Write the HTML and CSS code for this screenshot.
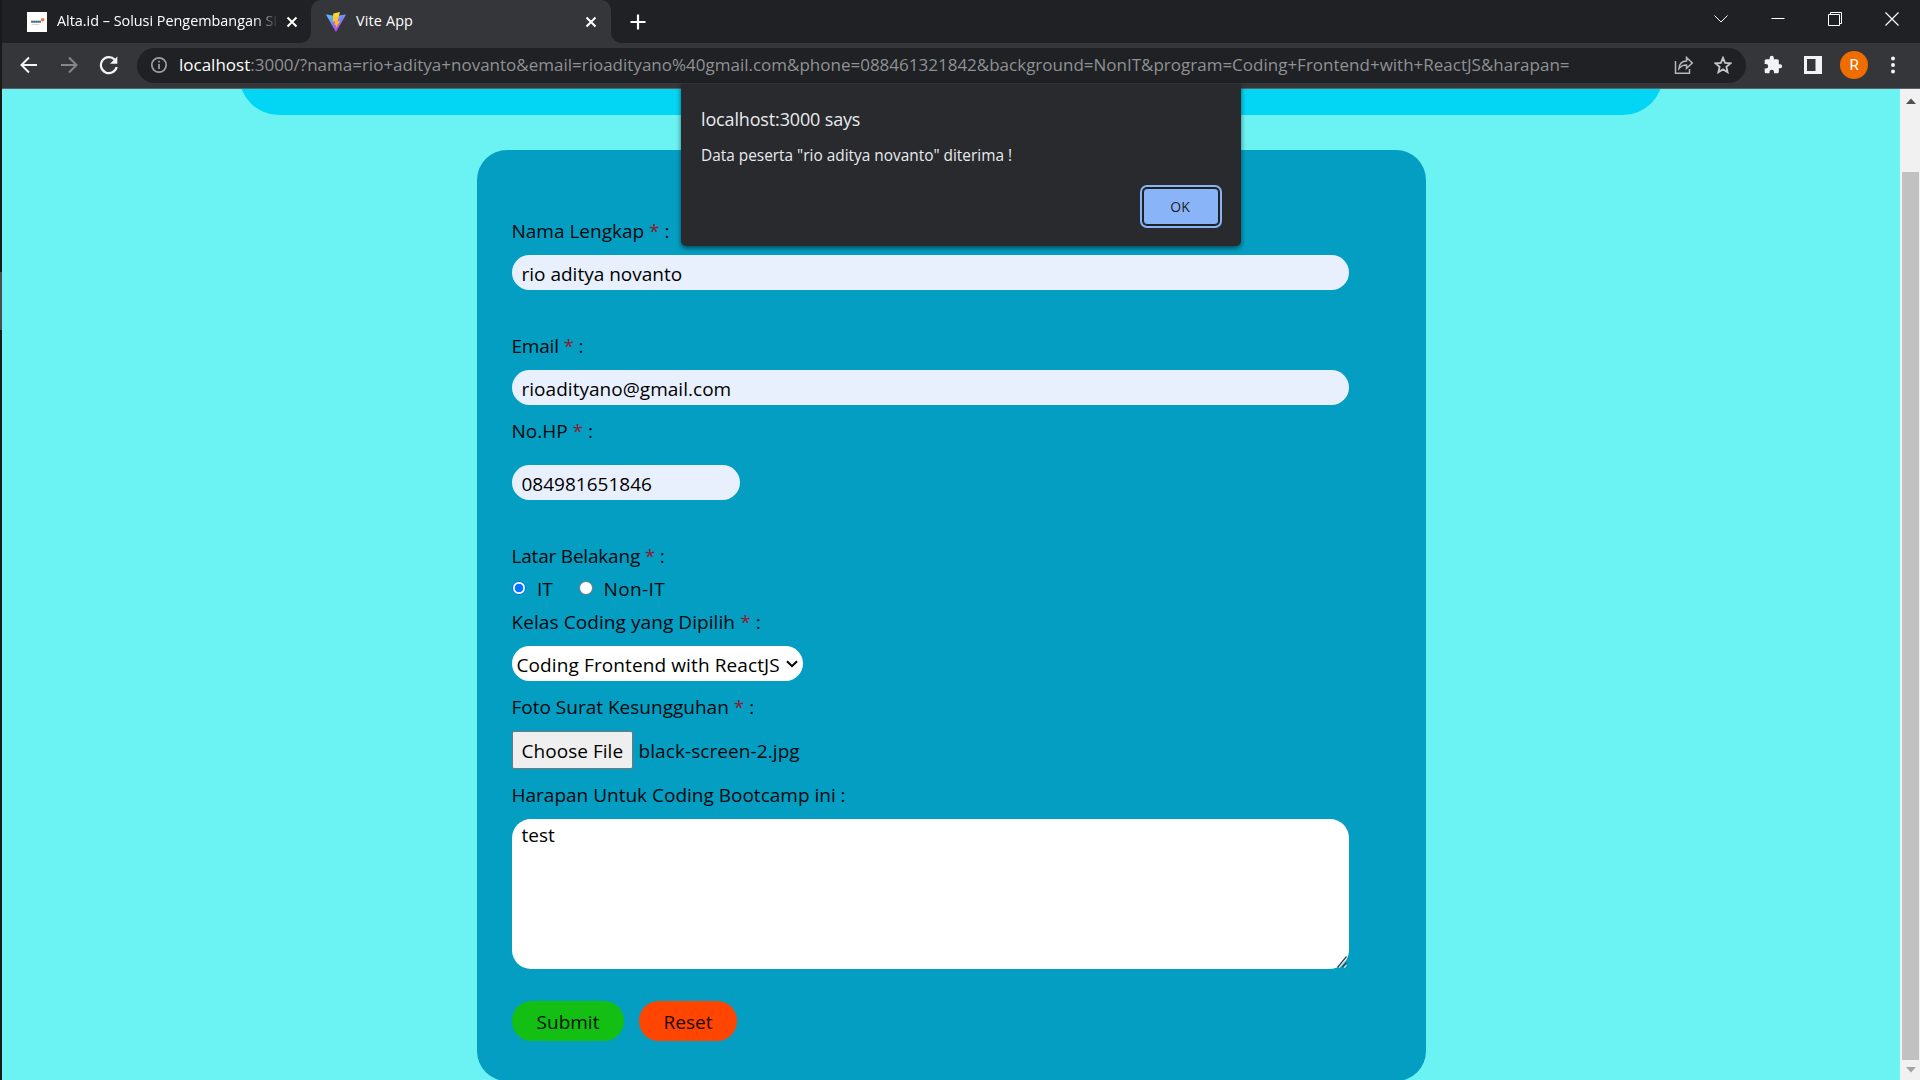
FILE: index.html
```html
<!DOCTYPE html>
<html lang="id">
<head>
<meta charset="utf-8">
<title>Vite App</title>
<link rel="stylesheet" href="styles.css">
</head>
<body>
<div class="screen">
  <div class="desktop-edge"><span class="edge-mark"></span></div>
  <div class="browser">
    <header class="tabstrip">
      <div class="tab tab-idle">
        <svg class="favicon" width="20" height="20" viewBox="0 0 20 20"><rect width="20" height="20" fill="#fff"/><path d="M4 9.700h10" stroke="#6f86a3" stroke-width="2.200"/><path d="M4.500 9.700h9" stroke="#3f5d86" stroke-width="1" stroke-dasharray="1.500 .7"/><path d="M4.500 12.500h8" stroke="#c9ced4" stroke-width=".8"/><circle cx="15.700" cy="7.700" r="1.800" fill="#f47b30"/></svg>
        <span class="tab-title fade">Alta.id – Solusi Pengembangan SI</span>
        <svg class="tab-close" width="12" height="12" viewBox="0 0 12 12"><path d="M1.500 1.500l9 9m0-9l-9 9" stroke="#fff" stroke-width="2"/></svg>
      </div>
      <div class="tab tab-active">
        <svg class="favicon" width="20" height="20" viewBox="0 0 20 20">
          <defs>
            <linearGradient id="v" x1="0" y1="0" x2=".6" y2="1"><stop offset="0" stop-color="#41d1ff"/><stop offset="1" stop-color="#bd34fe"/></linearGradient>
            <linearGradient id="b" x1="0" y1="0" x2="0" y2="1"><stop offset="0" stop-color="#ffdd35"/><stop offset="1" stop-color="#ffa800"/></linearGradient>
          </defs>
          <path d="M.5 2.400L10 4l9.500-1.600a.3.300 0 0 1 .3.500L10.300 19.600a.4.400 0 0 1-.7 0L.200 2.900a.3.300 0 0 1 .3-.5z" fill="url(#v)"/>
          <path d="M14 0L7.300 1.400 6.700 9.700l2.500-.5-.8 4 2-.6-1 5 4.700-8.700-2.700.6z" fill="url(#b)"/>
        </svg>
        <span class="tab-title">Vite App</span>
        <svg class="tab-close" width="12" height="12" viewBox="0 0 12 12"><path d="M1.500 1.500l9 9m0-9l-9 9" stroke="#fff" stroke-width="2"/></svg>
      </div>
      <svg class="new-tab" width="16" height="16" viewBox="0 0 16 16"><path d="M8 .5v15M.5 8h15" stroke="#fff" stroke-width="2.200"/></svg>
      <div class="window-buttons">
        <svg width="14" height="14" viewBox="0 0 14 14"><path d="M.5 3.500L7 10l6.500-6.500" fill="none" stroke="#fff"/></svg>
        <svg width="14" height="14" viewBox="0 0 14 14"><path d="M.5 6.500h13" stroke="#fff"/></svg>
        <svg width="14" height="14" viewBox="0 0 14 14"><path d="M.5 2.500h11v11H.5zM2.500 2.500v-2h11v11h-2" fill="none" stroke="#fff"/></svg>
        <svg width="14" height="14" viewBox="0 0 14 14"><path d="M.5.5l13 13m0-13l-13 13" stroke="#fff" stroke-width="1.200"/></svg>
      </div>
    </header>

    <div class="toolbar">
      <svg width="18" height="18" viewBox="0 0 18 18" fill="none" stroke="#f1f3f4" stroke-width="2"><path d="M17 9H2M9 1.500L1.500 9 9 16.500"/></svg>
      <svg width="18" height="18" viewBox="0 0 18 18" fill="none" stroke="#85878a" stroke-width="2"><path d="M1 9h15M9 1.500L16.500 9 9 16.500"/></svg>
      <svg width="20" height="20" viewBox="0 0 20 20"><path d="M15.800 4.700A8 8 0 1 0 17.700 12" fill="none" stroke="#f1f3f4" stroke-width="2.200"/><path d="M18.300 1.500v7.300H11z" fill="#f1f3f4"/></svg>
      <div class="omnibox">
        <svg width="18" height="18" viewBox="0 0 18 18"><circle cx="9" cy="9" r="7.200" fill="none" stroke="#9aa0a6" stroke-width="1.700"/><path d="M9 8v5M9 4.800v1.800" stroke="#9aa0a6" stroke-width="1.700"/></svg>
        <span class="url"><span class="host">localhost</span>:3000/?nama=rio+aditya+novanto&amp;email=rioadityano%40gmail.com&amp;phone=088461321842&amp;background=NonIT&amp;program=Coding+Frontend+with+ReactJS&amp;harapan=</span>
        <svg class="share" width="20" height="20" viewBox="0 0 20 20" fill="none" stroke="#b4b7bb" stroke-width="1.500"><path d="M1.500 6v12.200h14V14"/><path d="M5 13.500C5.500 8.500 8.500 6 12.500 6V2.500L18.300 8l-5.800 5.300V10C9.500 10 7 11 5 13.500z"/></svg>
        <svg width="18" height="18" viewBox="0 0 18 18"><path d="M9 1.800l2.100 5 5.400.5-4.100 3.600 1.200 5.300L9 13.400l-4.600 2.800 1.200-5.300L1.500 7.300l5.400-.5z" fill="none" stroke="#c4c7ca" stroke-width="1.800"/></svg>
      </div>
      <svg width="20" height="20" viewBox="0 0 24 24"><path fill="#f1f3f4" d="M20.500 11H19V7a2 2 0 0 0-2-2h-4V3.500a2.500 2.500 0 0 0-5 0V5H4a2 2 0 0 0-2 2v3.800h1.500a2.700 2.700 0 0 1 0 5.400H2V20a2 2 0 0 0 2 2h3.800v-1.500a2.700 2.700 0 0 1 5.400 0V22H17a2 2 0 0 0 2-2v-4h1.500a2.500 2.500 0 0 0 0-5z"/></svg>
      <svg class="panel" width="18" height="18" viewBox="0 0 18 18"><path fill="#f1f3f4" fill-rule="evenodd" d="M0 0h18v18H0zM3 3v12h8.500V3z"/></svg>
      <span class="avatar">R</span>
      <svg class="kebab" width="4" height="18" viewBox="0 0 4 18" fill="#f1f3f4"><circle cx="2" cy="2.500" r="2"/><circle cx="2" cy="9" r="2"/><circle cx="2" cy="15.500" r="2"/></svg>
    </div>

    <div class="viewport">
      <main class="page">
        <div class="banner"></div>
        <form class="card">
          <label class="label" for="nama">Nama Lengkap <i>*</i> :</label>
          <input class="field" id="nama" type="text" value="rio aditya novanto">
          <label class="label spaced tight" for="email">Email <i>*</i> :</label>
          <input class="field wide-text" id="email" type="text" value="rioadityano@gmail.com">
          <label class="label near" for="hp">No.HP <i>*</i> :</label>
          <input class="field field-short" id="hp" type="text" value="084981651846">
          <span class="label spaced tight">Latar Belakang <i>*</i> :</span>
          <div class="radios">
            <span class="radio checked"></span><span class="it">IT</span>
            <span class="radio"></span><span class="non-it">Non-IT</span>
          </div>
          <span class="label label-kelas">Kelas Coding yang Dipilih <i>*</i> :</span>
          <div class="select">
            <span>Coding Frontend with ReactJS</span>
            <svg width="12" height="8" viewBox="0 0 12 8"><path d="M1 1.200l5 5 5-5" fill="none" stroke="#000" stroke-width="2"/></svg>
          </div>
          <span class="label near">Foto Surat Kesungguhan <i>*</i> :</span>
          <div class="file">
            <span class="file-button">Choose File</span>
            <span class="file-name">black-screen-2.jpg</span>
          </div>
          <label class="label near" for="harapan">Harapan Untuk Coding Bootcamp ini :</label>
          <div class="area-wrap">
            <textarea class="area" id="harapan">test</textarea>
            <svg class="grip" width="10" height="12" viewBox="0 0 10 12"><path d="M.5 11.500L9.500.5M5.500 11.500l4-5" stroke="#444" stroke-width="1.300"/><path d="M2 12L9.500 3M7 12l2.500-3" stroke="#b9e3ee" stroke-width="1.200"/></svg>
          </div>
          <div class="actions">
            <button class="btn submit" type="button">Submit</button>
            <button class="btn reset" type="button">Reset</button>
          </div>
        </form>
      </main>
      <div class="scrollbar">
        <svg width="10" height="6" viewBox="0 0 10 6"><path d="M0 6l5-5.500L10 6z" fill="#505050"/></svg>
        <span class="thumb"></span>
        <svg width="10" height="6" viewBox="0 0 10 6"><path d="M0 0l5 5.500L10 0z" fill="#a3a3a3"/></svg>
      </div>
    </div>
  </div>

  <div class="dialog">
    <h1 class="dialog-title">localhost:3000 says</h1>
    <p class="dialog-text">Data peserta "rio aditya novanto" diterima !</p>
    <button class="ok" type="button">OK</button>
  </div>
</div>
</body>
</html>
```
FILE: styles.css
```css
* { box-sizing: border-box; }

body {
  margin: 0;
  overflow: hidden;
  font-family: "Open Sans", "Noto Sans", sans-serif;
}

svg { display: block; flex: none; }

.screen {
  position: relative;
  display: flex;
  width: 1920px;
  height: 1080px;
  overflow: hidden;
}

.desktop-edge {
  width: 2px;
  padding-top: 272px;
  background: #191919;
}
.edge-mark { display: block; height: 58px; background: #4c4c4c; }

.browser {
  display: grid;
  grid-template-rows: 43px 46px 991px;
  flex: 1;
  min-width: 0;
}

/* Tab strip */
.tabstrip {
  display: flex;
  align-items: center;
  background: #202124;
}
.tab {
  display: flex;
  align-items: center;
  height: 43px;
  color: #fff;
}
.tab-idle { width: 309px; padding: 0 13px 0 25px; }
.tab-active {
  position: relative;
  width: 300px;
  padding: 0 14px 0 15px;
  background: #35363a;
  border-radius: 10px 10px 0 0;
}
.tab-active::before,
.tab-active::after {
  content: "";
  position: absolute;
  bottom: 0;
  width: 10px;
  height: 10px;
}
.tab-active::before { left: -10px; background: radial-gradient(circle at 0 0, #202124 9.5px, #35363a 10px); }
.tab-active::after { right: -10px; background: radial-gradient(circle at 100% 0, #202124 9.5px, #35363a 10px); }
.tab-title {
  flex: 1;
  margin: 0 0 2px 10px;
  overflow: hidden;
  white-space: nowrap;
  font-size: 14.4px;
  letter-spacing: 0.15px;
  line-height: 20px;
}
.fade {
  margin-right: 10px;
  letter-spacing: -0.01px;
  -webkit-mask-image: linear-gradient(90deg, #000 196px, transparent 222px);
  mask-image: linear-gradient(90deg, #000 196px, transparent 222px);
}
.new-tab { margin-left: 19px; }
.window-buttons {
  display: flex;
  gap: 43px;
  margin: -6px 21px 0 auto;
}

/* Toolbar */
.toolbar {
  display: flex;
  align-items: center;
  padding: 0 25px 1px 18px;
  border-bottom: 1px solid #5f6063;
  background: #35363a;
}
.toolbar > svg + svg { margin-left: 22px; }
.toolbar > svg + svg + svg { margin-left: 21px; }
.omnibox {
  display: flex;
  align-items: center;
  width: 1609px;
  height: 35px;
  margin: 0 17px 0 18px;
  padding: 0 14px 0 13px;
  border-radius: 18px;
  background: #202124;
}
.url {
  flex: 1;
  margin-left: 11px;
  color: #8f9194;
  font-size: 17px;
  line-height: 24px;
  white-space: nowrap;
}
.host { color: #fff; }
.share { margin-right: 20px; }
.toolbar > .omnibox + svg { margin: 0; }
.toolbar > .panel { margin: 0 18px 0 21px; }
.avatar {
  width: 28px;
  height: 28px;
  border-radius: 50%;
  background: #ef6c00;
  color: #fff;
  font: 15px/28px Roboto, sans-serif;
  text-align: center;
}
.kebab { margin-left: auto; }

/* Page */
.viewport {
  display: flex;
  overflow: hidden;
  background: #6bf2f2;
}
.page { flex: 1; }
.banner {
  width: 1424px;
  height: 80px;
  margin: -54px auto 0;
  border-radius: 40px;
  background: #03d5f4;
}
.card {
  display: flex;
  flex-direction: column;
  align-items: flex-start;
  width: 949px;
  height: 931px;
  margin: 35px auto 0;
  padding: 68px 35px 0;
  border-radius: 30px;
  background: #059ec3;
  color: #00080c;
  font-size: 19px;
}
.label { line-height: 27px; margin-bottom: 10px; }
.label i { color: #8b1c30; font-style: normal; }
.tight { letter-spacing: -0.2px; }
.near { margin-top: 13px; }
.spaced { margin-top: 43px; }
.field {
  width: 837px;
  height: 35px;
  padding: 2px 10px 0;
  border: 0;
  border-radius: 17.5px;
  background: #e8f0fe;
  color: #000;
  font: 19px "Open Sans", sans-serif;
}
.wide-text { letter-spacing: 0.03px; }
.field-short { width: 228px; margin-top: 10px; }

.radios {
  display: flex;
  align-items: center;
  height: 27px;
  margin-top: -4px;
  line-height: 27px;
}
.radio {
  width: 14px;
  height: 14px;
  margin: -3px 11px 0 0.5px;
  border: 1.3px solid #767676;
  border-radius: 50%;
  background: #fff;
}
.checked {
  border-color: #0075ff;
  background: radial-gradient(circle, #0075ff 4px, #fff 4.6px);
}
.it { width: 41px; }
.non-it { letter-spacing: 0.4px; }

.label-kelas { margin-top: 6px; letter-spacing: 0.08px; }
.select {
  display: flex;
  align-items: center;
  width: 291px;
  height: 35px;
  padding: 2px 5px 0 5px;
  border-radius: 17.5px;
  background: #fff;
  color: #000;
  letter-spacing: 0.11px;
  white-space: nowrap;
}
.select svg { margin: -2px 0 0 auto; }

.file { display: flex; align-items: center; height: 38px; }
.file-button {
  width: 121px;
  height: 38px;
  padding-left: 9px;
  border: 1px solid #767676;
  border-radius: 2px;
  background: #efefef;
  color: #000;
  line-height: 38px;
  letter-spacing: 0.04px;
}
.file-name { margin-left: 6px; padding-top: 2px; letter-spacing: 0.08px; }

.area-wrap { position: relative; height: 150px; }
.area {
  display: block;
  width: 837px;
  height: 150px;
  padding: 3px 10px;
  border: 0;
  border-radius: 19px;
  background: #fff;
  color: #000;
  font: 19px "Open Sans", sans-serif;
  resize: none;
}
.grip { position: absolute; right: 2px; bottom: 1px; }

.actions { display: flex; gap: 15px; margin-top: 32px; }
.btn {
  height: 40px;
  padding: 1px 0 0 1px;
  border: 0;
  border-radius: 20px;
  color: #07130a;
  font: 19px "Open Sans", sans-serif;
}
.submit { width: 112px; background: #12bf12; }
.reset { width: 98px; background: #ff4500; color: #1c0a04; }

/* Scrollbar */
.scrollbar {
  display: flex;
  flex-direction: column;
  justify-content: space-between;
  align-items: center;
  width: 20px;
  padding: 9px 0 7px 1px;
  background: #f1f1f1;
}
.thumb { width: 17px; height: 888px; margin: 68px 0 7px; background: #c1c1c1; }

/* Alert dialog over the page */
.dialog {
  position: absolute;
  top: 84px;
  left: 681px;
  display: flex;
  flex-direction: column;
  width: 560px;
  height: 162px;
  padding: 22px 20px 18px;
  border-radius: 0 0 5px 5px;
  background: #292a2d;
  box-shadow: 0 2px 5px rgba(0, 0, 0, 0.55);
  color: #e8eaed;
}
.dialog-title { margin: 0; font-size: 18px; font-weight: 400; line-height: 26px; letter-spacing: -0.15px; }
.dialog-text { margin: 13px 0 0; font-size: 15.4px; line-height: 22px; }
.ok {
  align-self: flex-end;
  width: 76px;
  height: 37px;
  margin: auto 2px 3px 0;
  padding: 0 2px 0 0;
  border: 1px solid #202124;
  border-radius: 4px;
  background: #8ab4f8;
  box-shadow: 0 0 0 1px #202124, 0 0 0 3px #8ab4f8;
  color: #202124;
  font: 14px "Open Sans", sans-serif;
}
```
